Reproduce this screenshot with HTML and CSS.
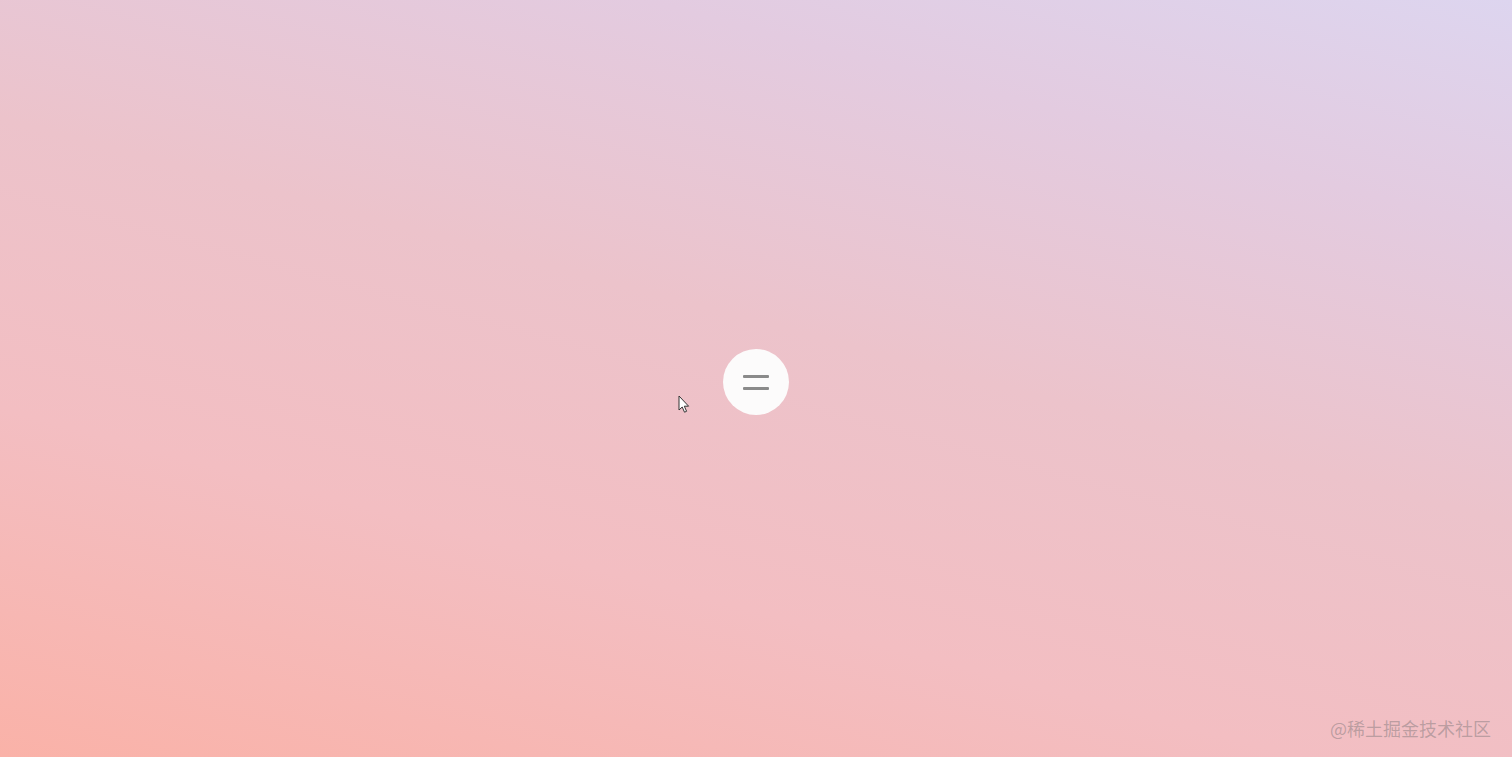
FILE: index.html
```html
<!DOCTYPE html>
<html lang="zh">
<head>
<meta charset="utf-8">
<title>Menu</title>
<link rel="stylesheet" href="styles.css">
</head>
<body>
<main class="stage">
  <button class="menu-btn" aria-label="menu">
    <span class="bar"></span>
    <span class="bar"></span>
  </button>
</main>
<svg class="cursor" width="12" height="19" viewBox="0 0 12 19" aria-hidden="true">
  <path d="M1 1 L1 15 L4.2 12 L6.5 17.2 L8.6 16.3 L6.3 11.2 L10.6 11.2 Z" fill="#fff" stroke="#333" stroke-width="1" stroke-linejoin="round"/>
</svg>
<div class="watermark">@稀土掘金技术社区</div>
</body>
</html>
```
FILE: styles.css
```css
html, body {
  margin: 0;
  padding: 0;
  height: 100%;
}
body {
  background: linear-gradient(15deg, #fab2a8 0%, #f3bec2 30%, #ecc3cb 55%, #e3cbe0 80%, #ddd5ef 100%);
  font-family: "Noto Sans CJK SC", "Noto Sans", sans-serif;
  overflow: hidden;
}
.stage {
  height: 100%;
  display: flex;
  align-items: center;
  justify-content: center;
  padding-top: 7px;
  box-sizing: border-box;
}
.menu-btn {
  width: 66px;
  height: 66px;
  border-radius: 50%;
  border: none;
  background: #fcfbfb;
  display: flex;
  flex-direction: column;
  align-items: center;
  justify-content: center;
  gap: 9px;
  padding: 0;
  cursor: pointer;
}
.bar {
  display: block;
  width: 26px;
  height: 3px;
  background: #8a8a8a;
  border-radius: 1px;
}
.cursor {
  position: absolute;
  left: 678px;
  top: 395px;
}
.watermark {
  position: absolute;
  right: 21px;
  bottom: 17px;
  font-size: 18px;
  line-height: 24px;
  color: rgba(120, 115, 118, 0.45);
  letter-spacing: 0;
}
```
